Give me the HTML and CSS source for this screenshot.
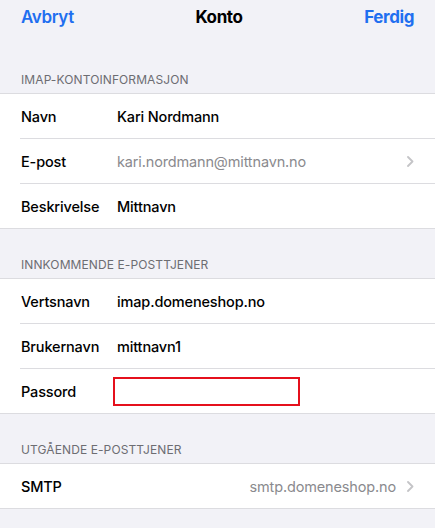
FILE: index.html
```html
<!DOCTYPE html>
<html lang="no">
<head>
<meta charset="utf-8">
<title>Konto</title>
<link rel="stylesheet" href="styles.css">
</head>
<body>
<div class="screen">
  <header class="nav">
    <span class="nav-btn">Avbryt</span>
    <span class="nav-title">Konto</span>
    <span class="nav-btn done">Ferdig</span>
  </header>

  <div class="section-title first">IMAP-KONTOINFORMASJON</div>
  <div class="group">
    <div class="row"><span class="label">Navn</span><span class="value">Kari Nordmann</span></div>
    <div class="row"><span class="label">E-post</span><span class="value muted">kari.nordmann@mittnavn.no</span><span class="chev"><svg width="7" height="11" viewBox="0 0 7 11"><path d="M1 1l4.5 4.5L1 10" fill="none" stroke="#c4c4c7" stroke-width="1.8" stroke-linecap="round" stroke-linejoin="round"/></svg></span></div>
    <div class="row"><span class="label">Beskrivelse</span><span class="value">Mittnavn</span></div>
  </div>

  <div class="section-title">INNKOMMENDE E-POSTTJENER</div>
  <div class="group">
    <div class="row"><span class="label">Vertsnavn</span><span class="value">imap.domeneshop.no</span></div>
    <div class="row"><span class="label">Brukernavn</span><span class="value">mittnavn1</span></div>
    <div class="row"><span class="label">Passord</span><span class="value"><span class="pw-box"></span></span></div>
  </div>

  <div class="section-title">UTGÅENDE E-POSTTJENER</div>
  <div class="group">
    <div class="row"><span class="label">SMTP</span><span class="value muted right">smtp.domeneshop.no</span><span class="chev"><svg width="7" height="11" viewBox="0 0 7 11"><path d="M1 1l4.5 4.5L1 10" fill="none" stroke="#c4c4c7" stroke-width="1.8" stroke-linecap="round" stroke-linejoin="round"/></svg></span></div>
  </div>
</div>
</body>
</html>
```

FILE: styles.css
```css
html, body {
  margin: 0;
  padding: 0;
  background: #f2f2f7;
}
body {
  font-family: Inter, "Noto Sans", "Liberation Sans", sans-serif;
  color: #000;
  width: 435px;
  height: 528px;
  overflow: hidden;
}
.screen {
  display: flex;
  flex-direction: column;
}
.nav {
  display: flex;
  justify-content: space-between;
  align-items: center;
  padding: 3px 21px 0;
  height: 27px;
  font-size: 17px;
  line-height: 22px;
  letter-spacing: -0.4px;
}
.nav-btn {
  color: #1f6ff0;
  font-weight: 600;
}
.nav-btn.done {
  font-weight: 700;
}
.nav-title {
  font-weight: 700;
}
.section-title {
  height: 49px;
  box-sizing: border-box;
  display: flex;
  align-items: flex-end;
  padding: 0 21px 5px;
  font-size: 12px;
  line-height: 16px;
  color: #6d6d72;
  letter-spacing: 0.1px;
}
.section-title.first {
  height: 63px;
}
.group {
  background: #fff;
  border-top: 1px solid #dcdce0;
  border-bottom: 1px solid #dcdce0;
}
.row {
  display: flex;
  align-items: center;
  height: 44px;
  margin-left: 20px;
  padding-left: 1px;
  padding-right: 21px;
  border-bottom: 1px solid #dcdce0;
  font-size: 14.5px;
  font-weight: 500;
  letter-spacing: -0.15px;
}
.row:last-child {
  border-bottom: none;
}
.label {
  width: 96px;
  flex: none;
}
.value {
  flex: 1;
  display: flex;
  align-items: center;
}
.value.muted {
  color: #8a8a8e;
  font-weight: 400;
}
.value.right {
  justify-content: flex-end;
}
.chev {
  flex: none;
  display: flex;
  margin-left: 11px;
}
.pw-box {
  display: block;
  width: 183px;
  height: 25px;
  margin-left: -4px;
  border: 2px solid #e5101c;
}
```
